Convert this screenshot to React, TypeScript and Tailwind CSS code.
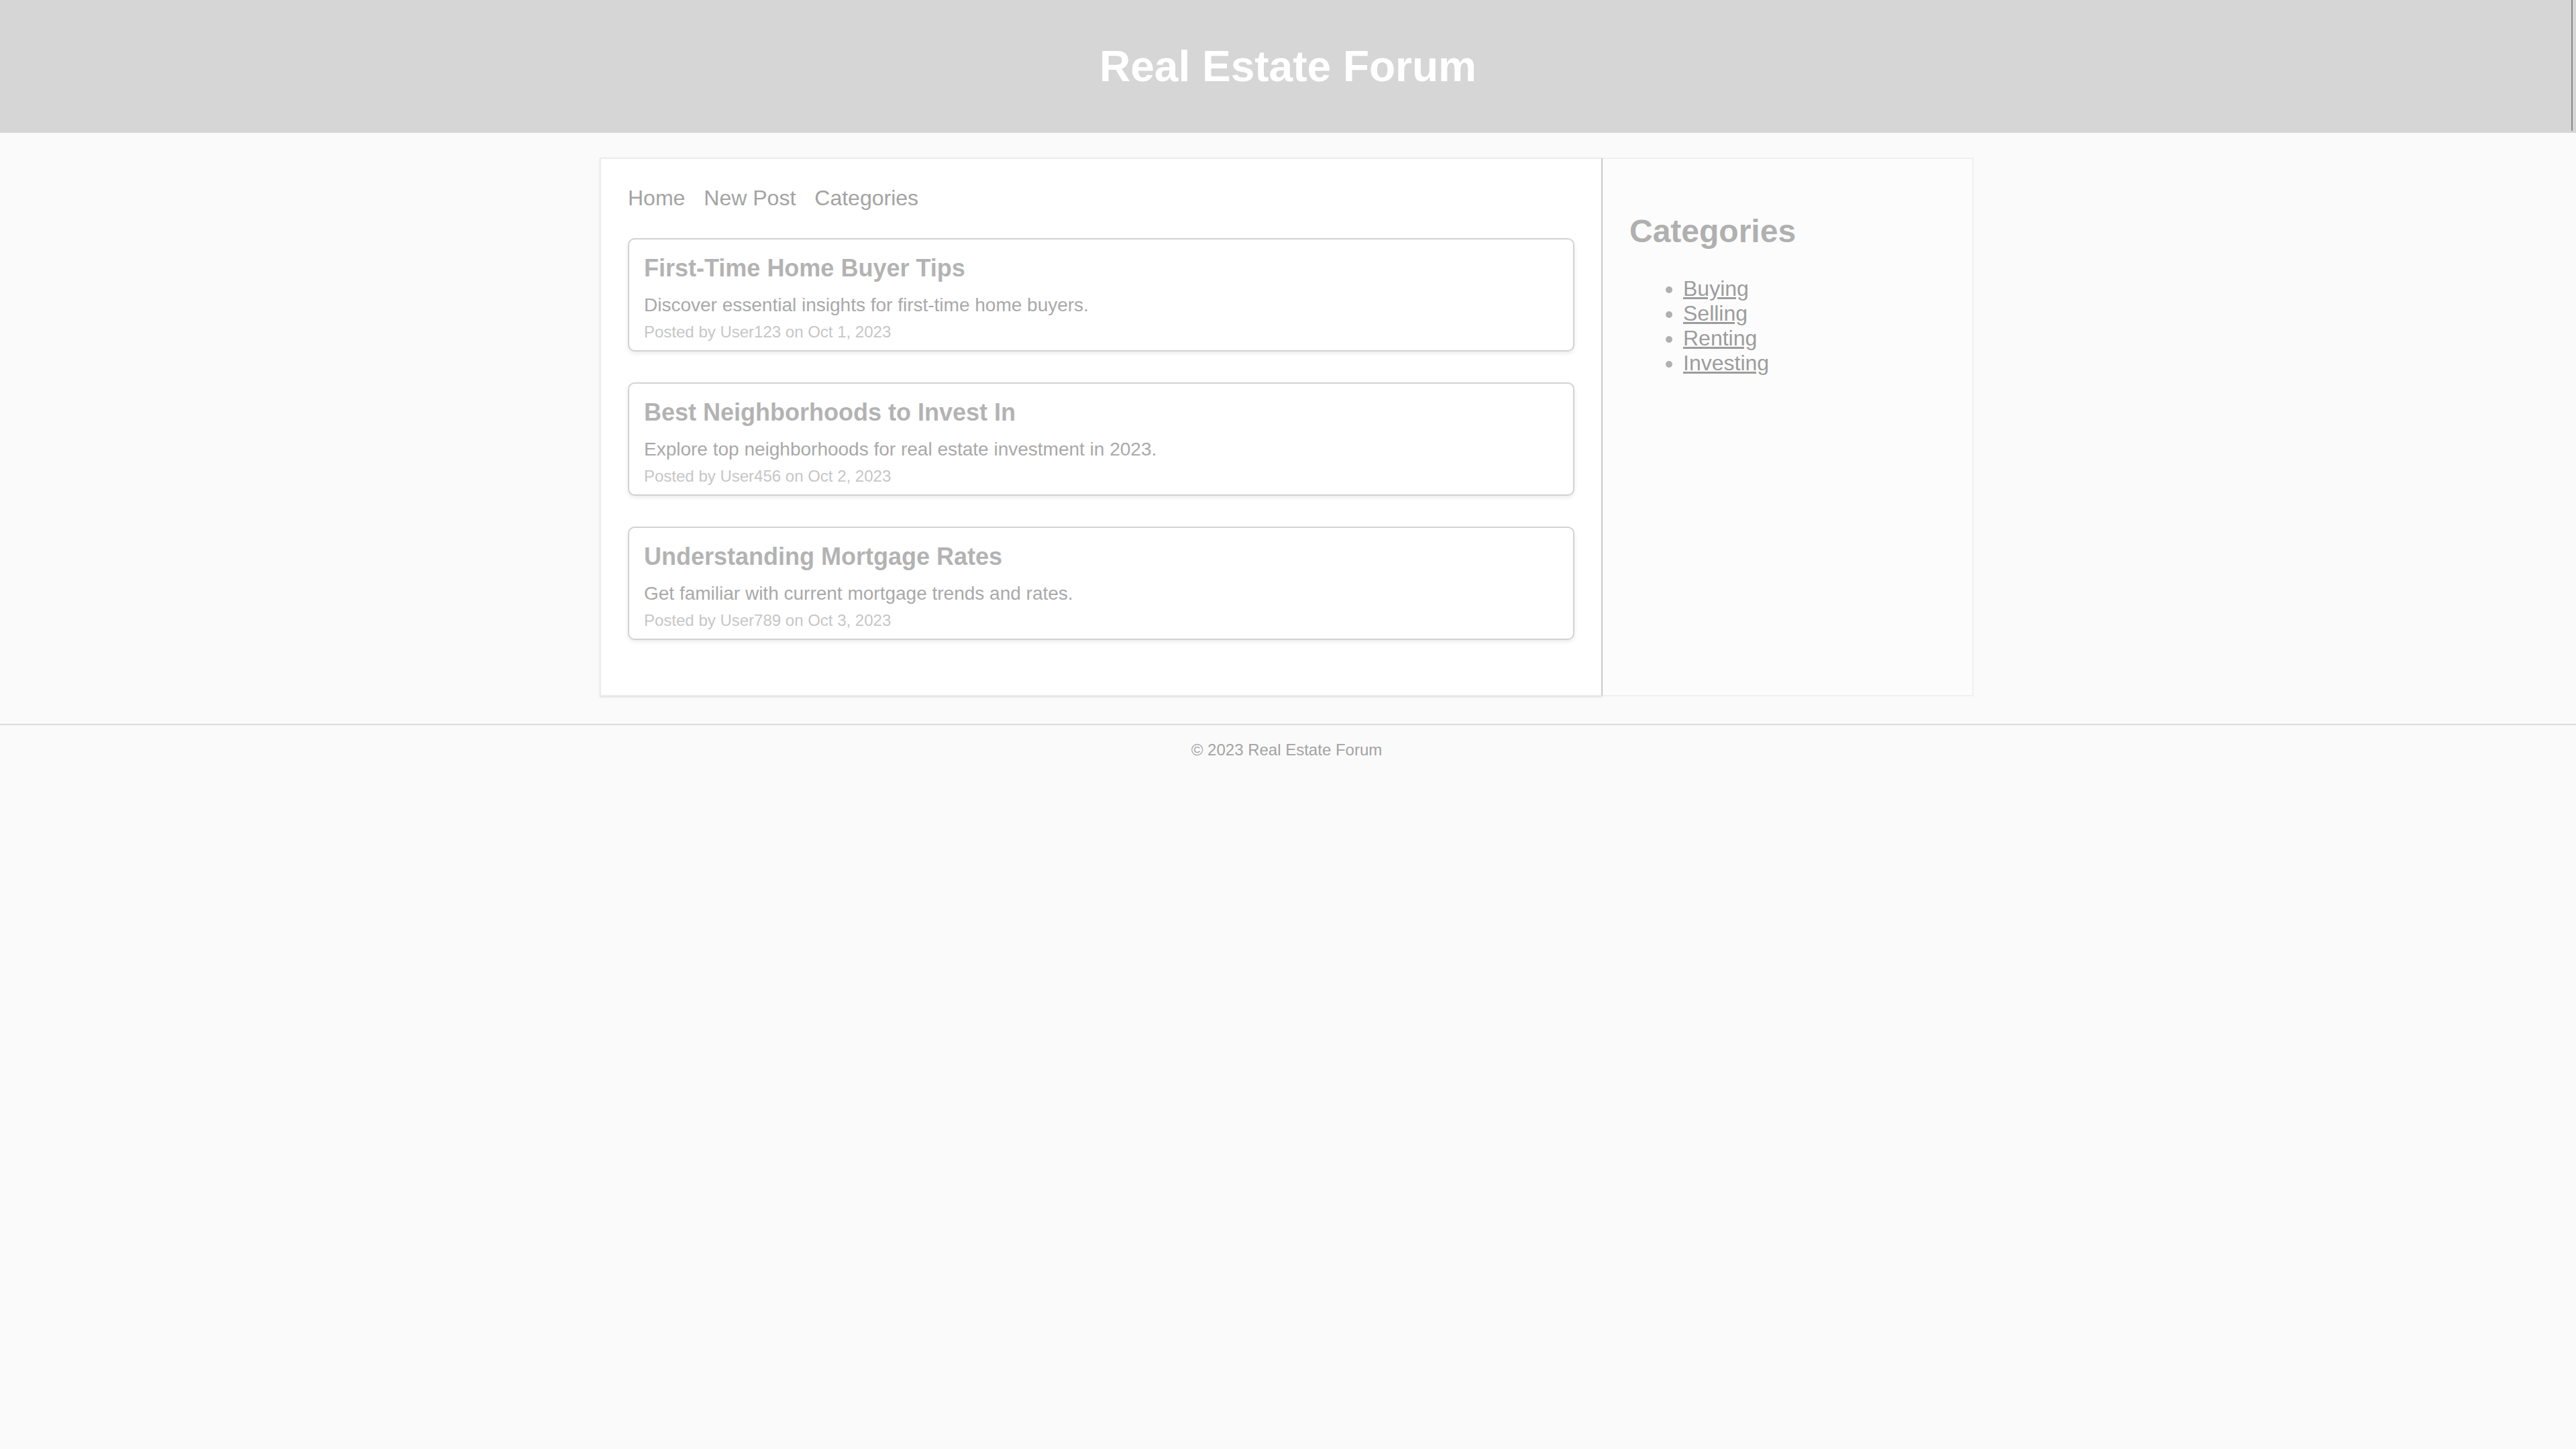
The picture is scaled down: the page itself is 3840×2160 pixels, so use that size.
import React from "react"

const posts = [
  {
    title: "First-Time Home Buyer Tips",
    text: "Discover essential insights for first-time home buyers.",
    meta: "Posted by User123 on Oct 1, 2023",
  },
  {
    title: "Best Neighborhoods to Invest In",
    text: "Explore top neighborhoods for real estate investment in 2023.",
    meta: "Posted by User456 on Oct 2, 2023",
  },
  {
    title: "Understanding Mortgage Rates",
    text: "Get familiar with current mortgage trends and rates.",
    meta: "Posted by User789 on Oct 3, 2023",
  },
]

const categories = ["Buying", "Selling", "Renting", "Investing"]

export default function App() {
  return (
    <div className="min-h-screen bg-[#fafafa] font-['Liberation_Sans',Arial,sans-serif]">
      {/* Header */}
      <header className="relative h-[198px] bg-[#d6d6d6] flex items-center justify-center">
        <h1 className="text-[64px] leading-[74px] font-bold text-white">Real Estate Forum</h1>
        <div className="absolute top-0 right-[5px] h-[195px] w-[2px] bg-[#8a8a8a]"></div>
      </header>

      <div className="flex justify-center pr-[4px]">
        <div className="mt-[37px] w-[2048px] flex">
          {/* Main column */}
          <main className="w-[1495px] bg-white border-2 border-[#ececec] border-r-[#c9c9c9] px-[40px] pt-[40px] pb-[82px] shadow-sm">
            <nav className="flex gap-[28px] text-[32px] leading-[37px] text-[#a3a3a3]">
              <a href="#">Home</a>
              <a href="#">New Post</a>
              <a href="#">Categories</a>
            </nav>

            <div className="mt-[41px] flex flex-col gap-[46px]">
              {posts.map((p) => (
                <div
                  key={p.title}
                  className="h-[169px] bg-white border-2 border-[#d2d2d2] rounded-[10px] shadow-[0_3px_6px_rgba(0,0,0,0.08)] px-[22px] pt-[21px]"
                >
                  <h3 className="text-[36px] leading-[44px] font-bold text-[#b3b3b3]">{p.title}</h3>
                  <p className="mt-[16px] text-[28px] leading-[34px] text-[#a9a9a9]">{p.text}</p>
                  <p className="mt-[9px] text-[24px] leading-[28px] text-[#c6c6c6]">{p.meta}</p>
                </div>
              ))}
            </div>
          </main>

          {/* Sidebar */}
          <aside className="flex-1 bg-[#fcfcfc] border-2 border-l-0 border-[#f0f0f0] px-[40px] pt-[40px]">
            <h2 className="mt-[40px] text-[48px] leading-[55px] font-bold text-[#b0b0b0]">Categories</h2>
            <ul className="mt-[40px] pl-[80px] list-disc marker:text-[#b0b0b0]">
              {categories.map((c) => (
                <li key={c} className="text-[32px] leading-[37px]">
                  <a href="#" className="underline text-[#9c9c9c]">
                    {c}
                  </a>
                </li>
              ))}
            </ul>
          </aside>
        </div>
      </div>

      {/* Footer */}
      <footer className="mt-[41px] border-t-2 border-[#dcdcdc] pt-[23px] pb-[23px] pr-[4px] text-center text-[24px] leading-[28px] text-[#a3a3a3]">
        © 2023 Real Estate Forum
      </footer>
    </div>
  )
}
